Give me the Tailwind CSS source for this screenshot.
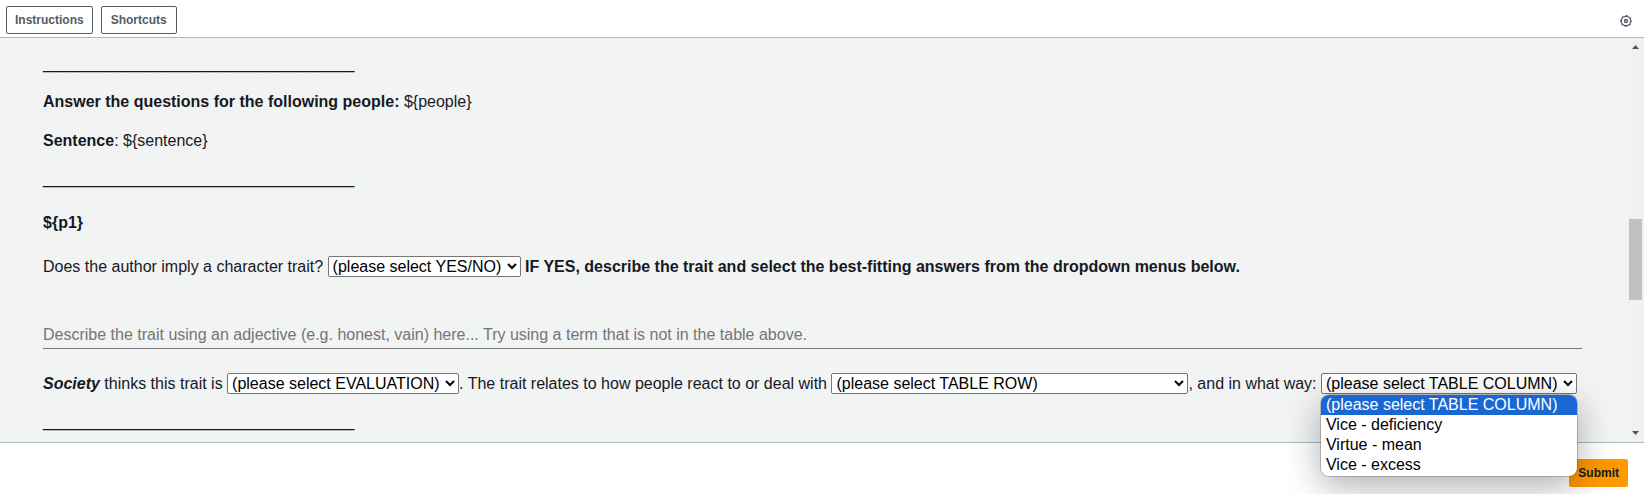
<!DOCTYPE html>
<html lang="en">
<head>
    <meta charset="UTF-8">
    <meta name="viewport" content="width=device-width, initial-scale=1.0">
    <title>Annotation task</title>
    <script src="https://cdn.jsdelivr.net/npm/@tailwindcss/browser@4"></script>
</head>
<body class="bg-white font-['Liberation_Sans',Arial,sans-serif] text-base text-[#16191f]">
    <div class="flex flex-col min-h-screen mr-[5px]">
        <!-- Top bar -->
        <header class="flex items-center justify-between h-[38px] pl-1.5 pr-3 border-b border-[#aab7b8]">
            <div class="flex gap-2 pt-0.5">
                <button type="button" class="h-7 px-2 border border-[#545b64] rounded-[2px] bg-white text-xs font-bold text-[#545b64]">Instructions</button>
                <button type="button" class="h-7 px-[9px] border border-[#545b64] rounded-[2px] bg-white text-xs font-bold text-[#545b64]">Shortcuts</button>
            </div>
            <button type="button" aria-label="Settings" class="pt-1">
                <svg class="w-3 h-3" viewBox="0 0 12 12" fill="none" stroke="#545b64">
                    <circle cx="6" cy="6" r="4.7" stroke-width="1.3"/>
                    <circle cx="6" cy="6" r="5.5" stroke-width="1" stroke-dasharray="2.3 2.02" stroke-dashoffset="1.15"/>
                    <circle cx="6" cy="6" r="1.5" stroke-width="1.4"/>
                </svg>
            </button>
        </header>

        <div class="flex border-b border-[#aab7b8] bg-[#f2f3f3]">
            <main class="flex-1 pl-[43px] pt-3.5 pb-2 pr-[45px] leading-6">
                <p class="mb-3.5">___________________________________</p>
                <p class="mb-[15px]"><b>Answer the questions for the following people:</b> ${people}</p>
                <p class="mb-3.5"><b>Sentence</b>: ${sentence}</p>
                <p class="mb-5">___________________________________</p>
                <p class="mb-5 font-bold">${p1}</p>
                <p>
                    <label for="implied">Does the author imply a character trait?</label>
                    <select id="implied" class="h-[21px] pr-0.5 border border-[#767676] rounded-[2px] bg-white text-black leading-5">
                        <option>(please select YES/NO)</option>
                        <option>YES</option>
                        <option>NO</option>
                    </select>
                    <b>IF YES, describe the trait and select the best-fitting answers from the dropdown menus below.</b>
                </p>
                <input type="text" aria-label="Trait description" placeholder="Describe the trait using an adjective (e.g. honest, vain) here... Try using a term that is not in the table above." class="block w-full h-7 mt-[42px] mb-[23px] border-b border-[#767676] placeholder:text-[#757575]">
                <div class="mb-3.5">
                    <label for="evaluation"><b><i>Society</i></b> thinks this trait is</label>
                    <select id="evaluation" class="h-[21px] pr-0.5 border border-[#767676] rounded-[2px] bg-white text-black leading-5">
                        <option>(please select EVALUATION)</option>
                    </select>.
                    <label for="row">The trait relates to how people react to or deal with</label>
                    <select id="row" class="w-[357px] h-[21px] pr-0.5 border border-[#767676] rounded-[2px] bg-white text-black leading-5">
                        <option>(please select TABLE ROW)</option>
                    </select>,
                    <label for="column">and in what way:</label>
                    <span class="relative inline-block">
                        <select id="column" class="h-[21px] pr-0.5 border border-[#767676] rounded-[2px] bg-white text-black leading-5">
                            <option>(please select TABLE COLUMN)</option>
                            <option>Vice - deficiency</option>
                            <option>Virtue - mean</option>
                            <option>Vice - excess</option>
                        </select>
                        <!-- Open list of the column drop-down -->
                        <ul role="listbox" aria-label="Table column" class="absolute top-[23px] left-0 z-10 w-full overflow-hidden rounded-lg bg-white text-black leading-5 ring-1 ring-black/20 shadow-[0_10px_36px_rgba(0,0,0,0.32)] pb-px">
                            <li role="option" aria-selected="true" class="pl-[5px] bg-[#1967d2] text-white whitespace-nowrap">(please select TABLE COLUMN)</li>
                            <li role="option" class="pl-[5px]">Vice - deficiency</li>
                            <li role="option" class="pl-[5px]">Virtue - mean</li>
                            <li role="option" class="pl-[5px]">Vice - excess</li>
                        </ul>
                    </span>
                </div>
                <p>___________________________________</p>
            </main>

            <!-- Scrollbar -->
            <div class="flex flex-col items-center w-[17px] py-[7px] bg-[#f1f1f1]">
                <svg class="w-[7px] h-1" viewBox="0 0 7 4" fill="#505050"><path d="M0 4 3.5 0 7 4z"/></svg>
                <div class="flex-1 flex flex-col items-center">
                    <div class="grow-[169]"></div>
                    <div class="w-[13px] h-[81px] bg-[#c1c1c1]"></div>
                    <div class="grow-[131]"></div>
                </div>
                <svg class="w-[7px] h-1" viewBox="0 0 7 4" fill="#505050"><path d="M0 0 3.5 4 7 0z"/></svg>
            </div>
        </div>

        <footer class="flex justify-end pt-4 pr-4 pb-2">
            <button type="submit" class="h-7 px-[9px] rounded-[2px] bg-[#ff9900] text-xs font-bold">Submit</button>
        </footer>
    </div>
</body>
</html>
